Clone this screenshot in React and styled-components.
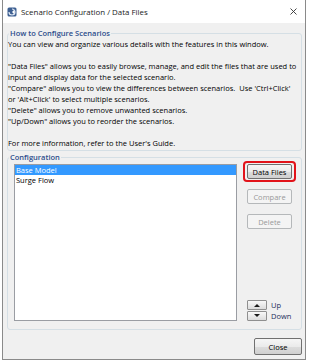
import React, { useState } from "react";
import styled, { createGlobalStyle } from "styled-components";

const Global = createGlobalStyle`
  html, body { margin: 0; padding: 0; background: #ffffff; }
  body { font-family: "Open Sans", "Noto Sans", sans-serif; }
`;

const Window = styled.div`
  margin-left: 2px;
  width: 304px;
  height: 360px;
  box-sizing: border-box;
  border: 1px solid #8a8a8a;
  border-top: 0;
  display: flex;
  flex-direction: column;
  background: #ffffff;
  font-size: 7.5px;
  color: #000;
`;

const TitleBar = styled.div`
  height: 23px;
  display: flex;
  align-items: center;
  padding: 0 6px 0 4px;
  gap: 4px;
  background: #ffffff;
`;

const Title = styled.div`
  flex: 1;
  font-size: 7.9px;
  color: #1a1a1a;
`;

const CloseX = styled.svg`
  width: 7px;
  height: 7px;
  margin-right: 2px;
`;

const Body = styled.div`
  flex: 1;
  background: #f0f0f0;
  display: flex;
  flex-direction: column;
  padding: 5px 3px 4px 4px;
  gap: 1px;
`;

const Group = styled.fieldset`
  margin: 0;
  padding: 0 6px ${p => (p.$grow ? "8px" : "1px")} 6px;
  border: 1px solid #d5dfe5;
  border-radius: 3px;
  min-width: 0;
  ${p => p.$grow && "flex: 1; display: flex; min-height: 0;"}
`;

const Legend = styled.legend`
  padding: 0 1px;
  margin-left: -5px;
  line-height: 11px;
  color: #2c4d8c;
  font-weight: 600;
`;

const Help = styled.div`
  line-height: 11px;
  margin-left: -6px;
  white-space: pre;
`;

const ConfigRow = styled.div`
  flex: 1;
  display: flex;
  gap: 10px;
  padding-top: 1px;
`;

const ListBox = styled.div`
  width: 223px;
  box-sizing: border-box;
  background: #ffffff;
  border: 1px solid #9a9da3;
`;

const ListItem = styled.div`
  height: 10px;
  line-height: 10px;
  padding-left: 1px;
  background: ${p => (p.$selected ? "#3399ff" : "transparent")};
  color: ${p => (p.$selected ? "#ffffff" : "#000000")};
  cursor: default;
`;

const ButtonCol = styled.div`
  width: 45px;
  display: flex;
  flex-direction: column;
  gap: 10px;
`;

const Button = styled.button`
  position: relative;
  box-sizing: border-box;
  width: ${p => p.$w || 45}px;
  height: ${p => p.$h || 15}px;
  padding: 0;
  font-family: inherit;
  font-size: 7.5px;
  color: #000;
  border: 1px solid #707070;
  border-radius: 2px;
  background: linear-gradient(#f6f6f6 0%, #ebebeb 50%, #dddddd 51%, #cfcfcf 100%);
  &:disabled {
    color: #9a9a9a;
    border-color: #b5b8ba;
    background: #f4f4f4;
  }
  ${p => p.$marked && `
    &::after {
      content: "";
      position: absolute;
      left: -5px; right: -5px; top: -4px; bottom: -4px;
      border: 2px solid #e2131a;
      border-radius: 4px;
    }
  `}
`;

const Mover = styled.div`
  margin-top: auto;
  display: grid;
  grid-template-columns: 20px auto;
  column-gap: 4px;
  row-gap: 1px;
  align-items: center;
`;

const ArrowButton = styled.button`
  box-sizing: border-box;
  width: 20px;
  height: 10px;
  padding: 0;
  border: 1px solid #8f8f8f;
  border-radius: 1px;
  background: linear-gradient(#f8f8f8, #dcdcdc);
  display: flex;
  align-items: center;
  justify-content: center;
`;

const MoverLabel = styled.span`
  line-height: 10px;
  color: #1c2f5a;
`;

const Footer = styled.div`
  display: flex;
  justify-content: flex-end;
  padding-top: 7px;
`;

const helpText = `You can view and organize various details with the features in this window.

"Data Files" allows you to easily browse, manage, and edit the files that are used to
input and display data for the selected scenario.
"Compare" allows you to view the differences between scenarios.  Use 'Ctrl+Click'
or 'Alt+Click' to select multiple scenarios.
"Delete" allows you to remove unwanted scenarios.
"Up/Down" allows you to reorder the scenarios.

For more information, refer to the User's Guide.`;

function AppIcon() {
  return (
    <svg width="10" height="10" viewBox="0 0 10 10">
      <rect x="0.5" y="0.5" width="9" height="9" rx="1.5" fill="#3d5f91" />
      <path d="M2 5a3 3 0 1 0 3-3" stroke="#dfe8f5" strokeWidth="1.2" fill="none" />
      <path d="M5 5h3M6.5 3.5v3" stroke="#ffffff" strokeWidth="1" />
    </svg>
  );
}

function Tri({ up }) {
  return (
    <svg width="6" height="4" viewBox="0 0 6 4">
      <path d={up ? "M0 4L3 1L6 4Z" : "M0 0L3 3L6 0Z"} fill="#1a1a1a" />
    </svg>
  );
}

export default function App() {
  const [selected, setSelected] = useState(0);
  const scenarios = ["Base Model", "Surge Flow"];

  return (
    <>
      <Global />
      <Window>
        <TitleBar>
          <AppIcon />
          <Title>Scenario Configuration / Data Files</Title>
          <CloseX viewBox="0 0 7 7">
            <path d="M0.5 0.5L6.5 6.5M6.5 0.5L0.5 6.5" stroke="#333" strokeWidth="0.9" />
          </CloseX>
        </TitleBar>
        <Body>
          <Group>
            <Legend>How to Configure Scenarios</Legend>
            <Help>{helpText}</Help>
          </Group>
          <Group $grow>
            <Legend>Configuration</Legend>
            <ConfigRow>
              <ListBox>
                {scenarios.map((s, i) => (
                  <ListItem key={s} $selected={i === selected} onClick={() => setSelected(i)}>
                    {s}
                  </ListItem>
                ))}
              </ListBox>
              <ButtonCol>
                <Button $marked>Data Files</Button>
                <Button disabled>Compare</Button>
                <Button disabled>Delete</Button>
                <Mover>
                  <ArrowButton><Tri up /></ArrowButton>
                  <MoverLabel>Up</MoverLabel>
                  <ArrowButton><Tri /></ArrowButton>
                  <MoverLabel>Down</MoverLabel>
                </Mover>
              </ButtonCol>
            </ConfigRow>
          </Group>
          <Footer>
            <Button $w={48} $h={17}>Close</Button>
          </Footer>
        </Body>
      </Window>
    </>
  );
}
